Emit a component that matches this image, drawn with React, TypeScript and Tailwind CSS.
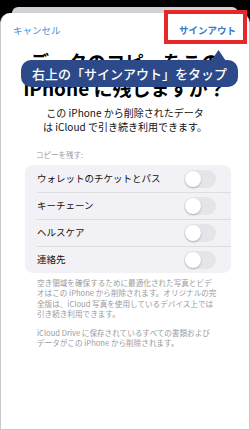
const rows = ['ウォレットのチケットとパス', 'キーチェーン', 'ヘルスケア', '連絡先']

const footer1 = [
  '空き領域を確保するために最適化された写真とビデ',
  'オはこの iPhone から削除されます。オリジナルの完',
  '全版は、iCloud 写真を使用しているデバイス上では',
  '引き続き利用できます。',
]

const footer2 = ['iCloud Drive に保存されているすべての書類および', 'データがこの iPhone から削除されます。']

function Toggle() {
  return (
    <div className="relative h-[18px] w-[32px] rounded-full bg-[#e4e4e9]">
      <div className="absolute left-[1px] top-[1px] h-[16px] w-[16px] rounded-full bg-white shadow-[0_1px_2px_rgba(0,0,0,0.25)]" />
    </div>
  )
}

export default function App() {
  return (
    <div className="relative flex h-[430px] w-[250px] flex-col overflow-hidden bg-black font-['Noto_Sans_CJK_JP','Noto_Sans',sans-serif]">
      {/* card behind the sheet */}
      <div className="mx-[12px] mt-[7px] h-[6px] shrink-0 rounded-t-[8px] bg-[#d2d2d6]" />

      {/* sheet */}
      <div className="flex flex-1 flex-col rounded-t-[10px] border-x border-b border-[#c9c9c9] bg-white">
        <div className="flex items-center justify-between px-[12px] pt-[10px] text-[9.5px] leading-[14px]">
          <span className="text-[#4a90db]">キャンセル</span>
          <span className="mr-[1px] font-semibold text-[#3a78c9]">サインアウト</span>
        </div>

        <h1 className="mt-[12px] text-center text-[19px] font-bold leading-[26px] text-black">
          データのコピーをこの
          <br />
          iPhone に残しますか？
        </h1>

        <p className="mt-[5px] text-center text-[10px] leading-[14px] text-[#111]">
          この iPhone から削除されたデータ
          <br />
          は iCloud で引き続き利用できます。
        </p>

        <div className="mt-[16px] pl-[35px] text-[7.5px] leading-[10px] text-[#9a9a9e]">コピーを残す:</div>

        <div className="mx-[24px] mt-[5px] w-[206px] rounded-[8px] bg-[#f2f2f6]">
          {rows.map((r, i) => (
            <div key={r} className="flex h-[27px] items-center pl-[12px]">
              <div
                className={`flex h-full flex-1 items-center justify-between pr-[15px] ${
                  i > 0 ? 'border-t border-[#dedee2]' : ''
                }`}
              >
                <span className="text-[9.5px] leading-none text-[#111]">{r}</span>
                <Toggle />
              </div>
            </div>
          ))}
        </div>

        <div className="mt-[5px] pl-[36px] text-[7.6px] leading-[10.4px] text-[#9a9a9e]">
          {footer1.map(l => (
            <div key={l} className="whitespace-nowrap">
              {l}
            </div>
          ))}
          <div className="mt-[8px]">
            {footer2.map(l => (
              <div key={l} className="whitespace-nowrap">
                {l}
              </div>
            ))}
          </div>
        </div>
      </div>

      {/* red highlight around sign out */}
      <div className="absolute left-[164px] top-[10px] h-[34px] w-[83px] border-[4px] border-[#e6282b]" />

      {/* tooltip */}
      <div className="absolute left-[21px] top-[60px] flex h-[27px] w-[217px] items-center justify-center rounded-[10px] bg-[#2c4a8a] text-[13px] font-medium text-white">
        右上の「サインアウト」をタップ
      </div>
      <svg className="absolute left-[211px] top-[50px]" width="15" height="11" viewBox="0 0 15 11">
        <path d="M7.5 0 L15 11 L0 11 Z" fill="#2c4a8a" />
      </svg>
    </div>
  )
}
